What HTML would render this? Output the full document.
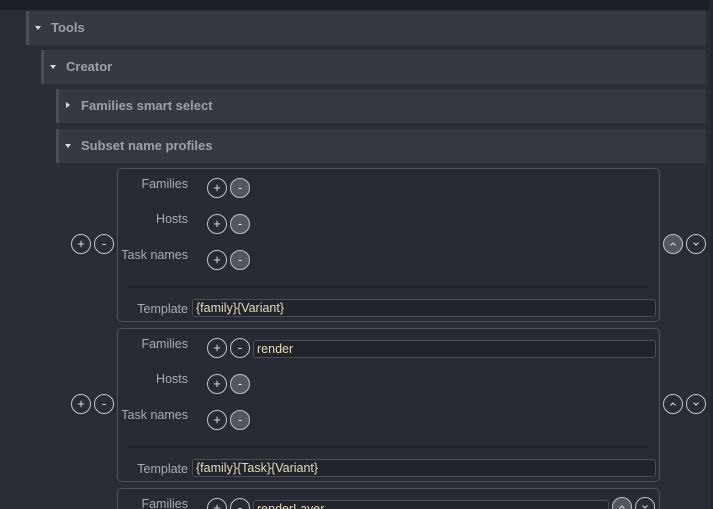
<!DOCTYPE html><html><head><style>
*{margin:0;padding:0;box-sizing:border-box}
html,body{width:713px;height:509px;overflow:hidden}
body{background:#2a2d35;font-family:"Liberation Sans",sans-serif;position:relative}
.a{position:absolute}
.top{left:0;top:0;width:713px;height:10px;background:#1c1f26}
.hd{position:absolute;height:34px;right:7px;background:#353942;border-left:3px solid #4b4f58;color:#9ba1aa;font-weight:bold;font-size:13px;line-height:34px}
.tri{position:absolute;top:15px;width:0;height:0;border-left:3.5px solid transparent;border-right:3.5px solid transparent;border-top:4px solid #d8dbe0}
.trr{position:absolute;top:13px;width:0;height:0;border-top:3.5px solid transparent;border-bottom:3.5px solid transparent;border-left:4px solid #d8dbe0}
.box{position:absolute;left:117px;width:543px;height:154px;border:1px solid #50545c;border-radius:5px;background:#282b33}
.lb{position:absolute;color:#a7acb4;font-size:12.5px;text-align:right;width:70px;left:0}
.b{position:absolute;width:20px;height:20px;border:1px solid #bfc3c9;border-radius:50%;color:#e0e3e7;font-size:13px;line-height:18px;text-align:center}
.b svg{position:absolute;left:5px;top:5px}
.g{background:#535760}
.in{position:absolute;height:18px;border:1px solid #4a4e56;border-radius:3px;background:#21242b;color:#e6dcb4;font-size:12.5px;line-height:16px;padding-left:3px}
.sep{position:absolute;left:10px;right:9px;height:2px;background:#1f2228}
</style></head><body>
<div class="a top"></div>
<div class="hd" style="left:26px;top:11px;padding-left:22px">Tools<div class="tri" style="left:6px"></div></div>
<div class="hd" style="left:41px;top:50px;padding-left:22px">Creator<div class="tri" style="left:6px"></div></div>
<div class="hd" style="left:56px;top:89px;padding-left:22px">Families smart select<div class="trr" style="left:7px"></div></div>
<div class="hd" style="left:56px;top:129px;padding-left:22px">Subset name profiles<div class="tri" style="left:6px"></div></div>

<div class="b" style="left:71px;top:234px">+</div><div class="b" style="left:94px;top:234px">-</div>
<div class="b g" style="left:663px;top:234px"><svg width="8" height="8"><path d="M1.5 5.5 L4 3 L6.5 5.5" stroke="#d8dbe0" fill="none"/></svg></div>
<div class="b" style="left:686px;top:234px"><svg width="8" height="8"><path d="M1.5 2.5 L4 5 L6.5 2.5" stroke="#d8dbe0" fill="none"/></svg></div>
<div class="box" style="top:168px">
<div class="lb" style="top:8px">Families</div>
<div class="b" style="left:89px;top:9px">+</div><div class="b g" style="left:112px;top:9px">-</div>
<div class="lb" style="top:43px">Hosts</div>
<div class="b" style="left:89px;top:45px">+</div><div class="b g" style="left:112px;top:45px">-</div>
<div class="lb" style="top:79px">Task names</div>
<div class="b" style="left:89px;top:81px">+</div><div class="b g" style="left:112px;top:81px">-</div>
<div class="sep" style="top:117px"></div>
<div class="lb" style="top:133px">Template</div>
<div class="in" style="left:74px;top:130px;width:464px">{family}{Variant}</div>
</div>

<div class="b" style="left:71px;top:394px">+</div><div class="b" style="left:94px;top:394px">-</div>
<div class="b" style="left:663px;top:394px"><svg width="8" height="8"><path d="M1.5 5.5 L4 3 L6.5 5.5" stroke="#d8dbe0" fill="none"/></svg></div>
<div class="b" style="left:686px;top:394px"><svg width="8" height="8"><path d="M1.5 2.5 L4 5 L6.5 2.5" stroke="#d8dbe0" fill="none"/></svg></div>
<div class="box" style="top:328px">
<div class="lb" style="top:8px">Families</div>
<div class="b" style="left:89px;top:9px">+</div><div class="b" style="left:112px;top:9px">-</div>
<div class="in" style="left:135px;top:11px;width:403px">render</div>
<div class="lb" style="top:43px">Hosts</div>
<div class="b" style="left:89px;top:45px">+</div><div class="b g" style="left:112px;top:45px">-</div>
<div class="lb" style="top:79px">Task names</div>
<div class="b" style="left:89px;top:81px">+</div><div class="b g" style="left:112px;top:81px">-</div>
<div class="sep" style="top:117px"></div>
<div class="lb" style="top:133px">Template</div>
<div class="in" style="left:74px;top:130px;width:464px">{family}{Task}{Variant}</div>
</div>

<div class="box" style="top:488px;height:21px;border-bottom:none;border-radius:5px 5px 0 0;overflow:hidden">
<div class="lb" style="top:8px">Families</div>
<div class="b" style="left:89px;top:9px">+</div><div class="b" style="left:112px;top:9px">-</div>
<div class="in" style="left:135px;top:11px;width:356px">renderLayer</div>
<div class="b g" style="left:494px;top:8px"><svg width="8" height="8"><path d="M1.5 5.5 L4 3 L6.5 5.5" stroke="#d8dbe0" fill="none"/></svg></div>
<div class="b" style="left:517px;top:8px"><svg width="8" height="8"><path d="M1.5 2.5 L4 5 L6.5 2.5" stroke="#d8dbe0" fill="none"/></svg></div>
</div>
<div class="a" style="left:710px;top:0;width:3px;height:509px;background:#24272e"></div>
</body></html>
